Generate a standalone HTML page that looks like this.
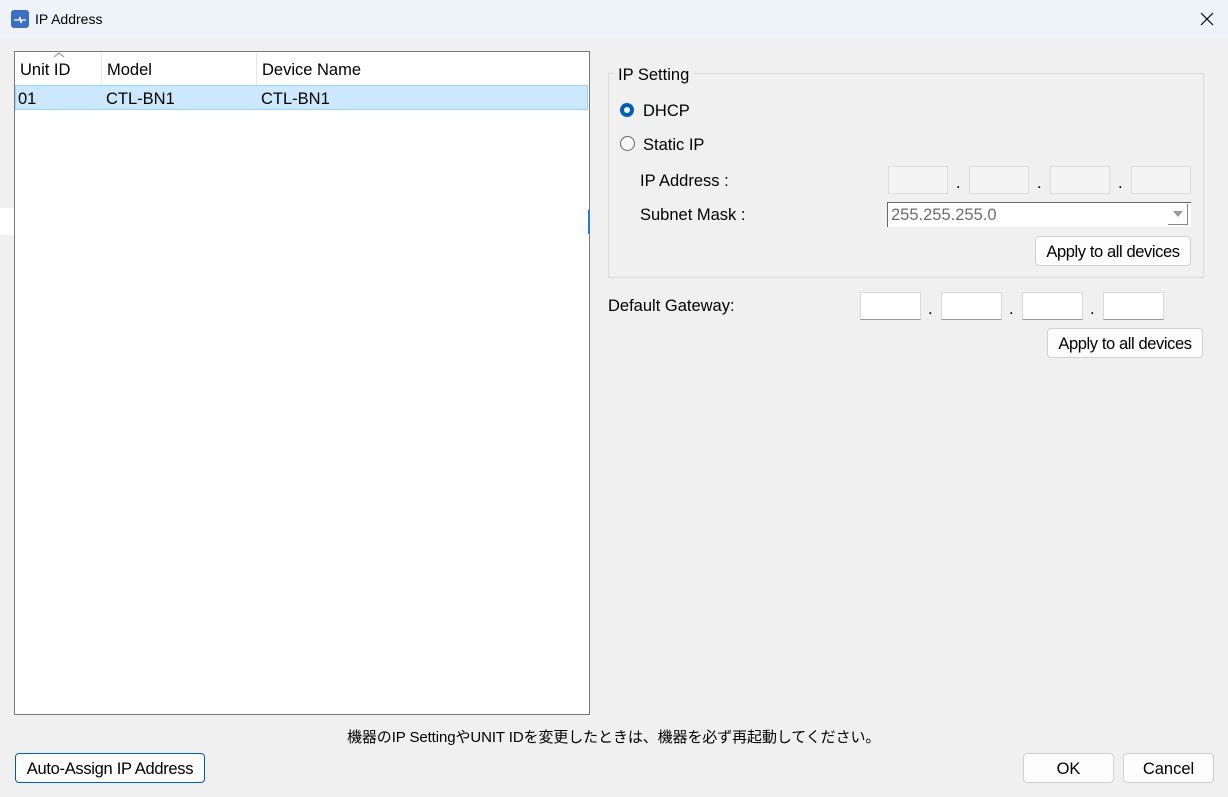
<!DOCTYPE html>
<html><head><meta charset="utf-8"><style>
body{margin:0;width:1228px;height:797px;overflow:hidden;background:#f0f0f0;font-family:"Liberation Sans","Noto Sans CJK JP",sans-serif;font-size:16.5px;color:#000;position:relative}
.a{position:absolute}
.title{left:0;top:0;width:1228px;height:38px;background:#eef3f9}
.box{background:#fff;border:1px solid #7a7a7a}
.dis{background:#f4f4f4;border:1px solid #dcdcdc}
.in{background:#fff;border:1px solid #d9d9d9;border-bottom:1px solid #999}
.btn{background:#fdfdfd;border:1px solid #d0d0d0;border-radius:4px;text-align:center;box-sizing:border-box;font-size:16.5px}
</style></head><body>
<div class="a title"></div>
<div class="a" style="left:11px;top:10px;width:18px;height:18px;background:#3a6fc4;border-radius:3px"></div>
<svg class="a" style="left:11px;top:10px" width="18" height="18"><path d="M3 10h5l1-3 1 6 1-3h4" stroke="#fff" stroke-width="1.2" fill="none"/></svg>
<div class="a" style="left:35px;top:11px;font-size:14px">IP Address</div>
<svg class="a" style="left:1200px;top:12px" width="14" height="14"><path d="M1 1L13 13M13 1L1 13" stroke="#000" stroke-width="1.2"/></svg>

<div class="a box" style="left:14px;top:51px;width:574px;height:662px"></div>
<div class="a" style="left:101px;top:53px;width:1px;height:32px;background:#e5e5e5"></div>
<div class="a" style="left:256px;top:53px;width:1px;height:32px;background:#e5e5e5"></div>
<svg class="a" style="left:53px;top:51px" width="12" height="8"><path d="M1 6L6 2L11 6" stroke="#888" fill="none"/></svg>
<div class="a" style="left:20px;top:61px">Unit ID</div>
<div class="a" style="left:107px;top:61px">Model</div>
<div class="a" style="left:262px;top:61px">Device Name</div>
<div class="a" style="left:15px;top:85px;width:571px;height:23px;background:#cce8ff;border:1px solid #99d1ff"></div>
<div class="a" style="left:18px;top:90px">01</div>
<div class="a" style="left:106px;top:90px">CTL-BN1</div>
<div class="a" style="left:261px;top:90px">CTL-BN1</div>
<div class="a" style="left:0;top:208px;width:14px;height:27px;background:#fff"></div>
<div class="a" style="left:588px;top:210px;width:2px;height:24px;background:#2a7bd6"></div>

<div class="a" style="left:608px;top:73px;width:594px;height:203px;border:1px solid #dcdcdc"></div>
<div class="a" style="left:614px;top:66px;padding:0 4px;background:#f0f0f0">IP Setting</div>
<div class="a" style="left:620px;top:103px;width:14px;height:14px;border-radius:50%;background:#005fb8"></div>
<div class="a" style="left:624px;top:107px;width:6px;height:6px;border-radius:50%;background:#fff"></div>
<div class="a" style="left:643px;top:102px">DHCP</div>
<div class="a" style="left:620px;top:136px;width:13px;height:13px;border-radius:50%;border:1px solid #666;background:#f8f8f8"></div>
<div class="a" style="left:643px;top:136px">Static IP</div>
<div class="a" style="left:640px;top:172px">IP Address :</div>
<div class="a" style="left:640px;top:206px">Subnet Mask :</div>
<div class="a dis" style="left:888px;top:166px;width:58px;height:26px"></div>
<div class="a dis" style="left:969px;top:166px;width:58px;height:26px"></div>
<div class="a dis" style="left:1050px;top:166px;width:58px;height:26px"></div>
<div class="a dis" style="left:1131px;top:166px;width:58px;height:26px"></div>
<div class="a" style="left:956px;top:174px">.</div><div class="a" style="left:1037px;top:174px">.</div><div class="a" style="left:1118px;top:174px">.</div>
<div class="a" style="left:887px;top:202px;width:303px;height:24px;background:#fff;border-top:1px solid #666;border-left:1px solid #666"></div>
<div class="a" style="left:891px;top:206px;color:#6d6d6d">255.255.255.0</div>
<div class="a" style="left:1168px;top:204px;width:19px;height:20px;border-right:1px solid #888;border-bottom:1px solid #888"></div>
<svg class="a" style="left:1172px;top:210px" width="12" height="8"><path d="M1 1H11L6 7Z" fill="#999"/></svg>
<div class="a btn" style="left:1035px;top:236px;width:156px;height:30px;line-height:31px;letter-spacing:-0.4px">Apply to all devices</div>

<div class="a" style="left:608px;top:297px">Default Gateway:</div>
<div class="a in" style="left:860px;top:292px;width:59px;height:26px"></div>
<div class="a in" style="left:941px;top:292px;width:59px;height:26px"></div>
<div class="a in" style="left:1022px;top:292px;width:59px;height:26px"></div>
<div class="a in" style="left:1103px;top:292px;width:59px;height:26px"></div>
<div class="a" style="left:928px;top:300px">.</div><div class="a" style="left:1009px;top:300px">.</div><div class="a" style="left:1090px;top:300px">.</div>
<div class="a btn" style="left:1047px;top:328px;width:156px;height:30px;line-height:31px;letter-spacing:-0.4px">Apply to all devices</div>

<div class="a" style="left:347px;top:726px;font-size:15px;letter-spacing:-0.1px">機器のIP SettingやUNIT IDを変更したときは、機器を必ず再起動してください。</div>
<div class="a btn" style="left:15px;top:753px;width:190px;height:30px;line-height:31px;border:1px solid #005fb8;letter-spacing:-0.3px">Auto-Assign IP Address</div>
<div class="a btn" style="left:1023px;top:753px;width:91px;height:30px;line-height:31px">OK</div>
<div class="a btn" style="left:1123px;top:753px;width:91px;height:30px;line-height:31px">Cancel</div>
</body></html>
